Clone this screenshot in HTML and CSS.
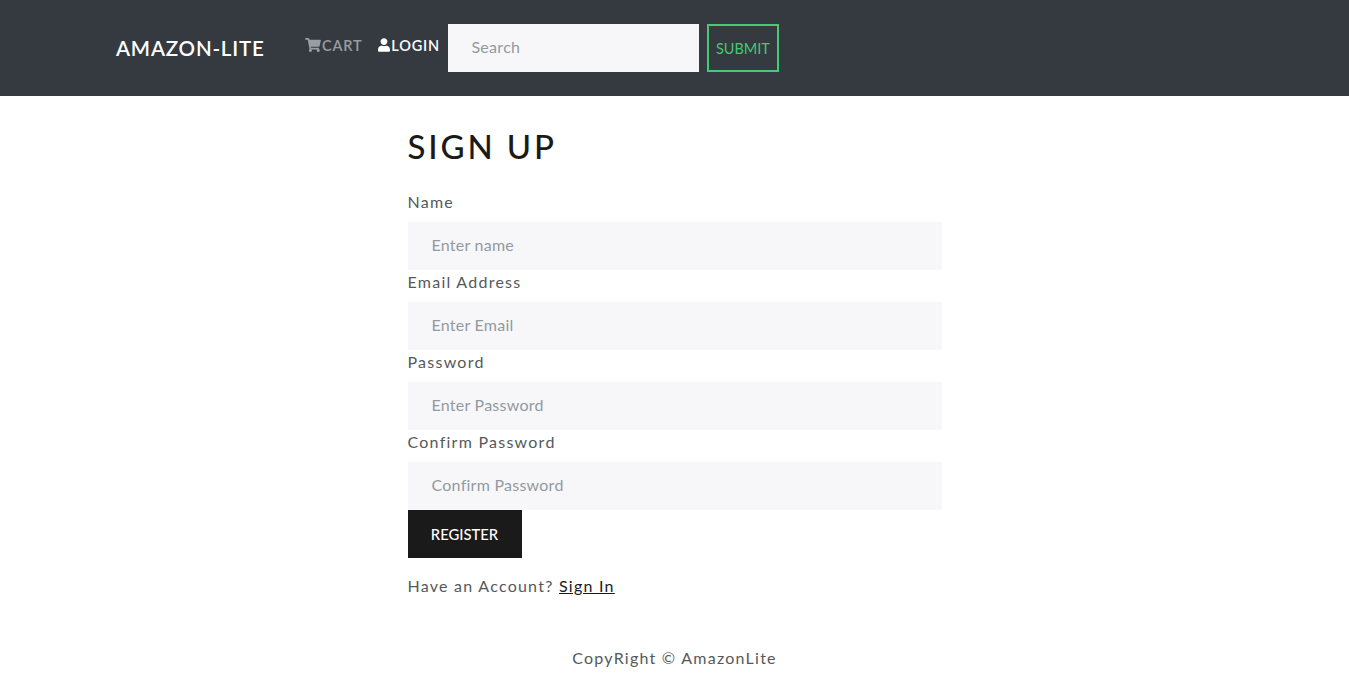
FILE: index.html
```html
<!DOCTYPE html>
<html lang="en">
<head>
<meta charset="utf-8">
<title>Amazon-Lite</title>
<link rel="stylesheet" href="styles.css">
</head>
<body>
<header class="navbar">
  <a class="brand" href="#">AMAZON-LITE</a>
  <nav class="nav">
    <a class="nav-link muted" href="#"><svg class="icon cart" viewBox="0 0 576 512"><path d="M528.12 301.319l47.273-208C578.806 78.301 567.391 64 551.99 64H159.208l-9.166-44.81C147.758 8.021 137.93 0 126.529 0H24C10.745 0 0 10.745 0 24v16c0 13.255 10.745 24 24 24h69.883l70.248 343.435C147.325 417.1 136 435.222 136 456c0 30.928 25.072 56 56 56s56-25.072 56-56c0-15.674-6.447-29.835-16.824-40h209.647C430.447 426.165 424 440.326 424 456c0 30.928 25.072 56 56 56s56-25.072 56-56c0-22.172-12.888-41.332-31.579-50.405l5.517-24.276c3.413-15.018-8.002-29.319-23.403-29.319H218.117l-6.545-32h293.145c11.206 0 20.92-7.754 23.403-18.681z"/></svg>CART</a>
    <a class="nav-link" href="#"><svg class="icon user" viewBox="0 0 448 512"><path d="M224 256c70.7 0 128-57.3 128-128S294.7 0 224 0 96 57.3 96 128s57.3 128 128 128zm89.6 32h-16.7c-22.2 10.2-46.9 16-72.9 16s-50.6-5.8-72.9-16h-16.7C60.2 288 0 348.2 0 422.4V464c0 26.5 21.5 48 48 48h352c26.5 0 48-21.5 48-48v-41.6c0-74.2-60.2-134.4-134.4-134.4z"/></svg>LOGIN</a>
  </nav>
  <form class="search">
    <input class="search-input" type="text" placeholder="Search">
    <button class="submit" type="button">SUBMIT</button>
  </form>
</header>
<main class="main">
  <h1 class="title">SIGN UP</h1>
  <form class="form">
    <label class="label">Name</label>
    <input class="field" type="text" placeholder="Enter name">
    <label class="label">Email Address</label>
    <input class="field" type="email" placeholder="Enter Email">
    <label class="label">Password</label>
    <input class="field" type="password" placeholder="Enter Password">
    <label class="label">Confirm Password</label>
    <input class="field" type="password" placeholder="Confirm Password">
    <button class="register" type="button">REGISTER</button>
  </form>
  <p class="switch">Have an Account? <a class="switch-link" href="#">Sign In</a></p>
</main>
<footer class="footer">CopyRight © AmazonLite</footer>
</body>
</html>
```
FILE: styles.css
```css
* { box-sizing: border-box; }
html, body { margin: 0; padding: 0; }
body {
  font-family: "Lato", "Liberation Sans", sans-serif;
  font-size: 16px;
  line-height: 24px;
  color: #55595c;
  background: #fff;
  letter-spacing: 1.25px;
}
a { text-decoration: none; color: inherit; }

.navbar {
  display: flex;
  align-items: center;
  height: 96px;
  padding: 0 116px;
  background: #343a40;
}
.brand {
  width: 181px;
  font-size: 20.5px;
  font-weight: 600;
  color: #fff;
  letter-spacing: .8px;
}
.nav { display: flex; }
.nav-link {
  display: flex;
  align-items: center;
  gap: 1px;
  padding: 0 8px;
  margin-top: -5px;
  font-size: 14.5px;
  font-weight: 600;
  letter-spacing: .8px;
  color: #fff;
}
.nav-link.muted { color: rgba(255, 255, 255, .5); }
.icon { display: block; height: 14px; fill: currentColor; margin-top: -2px; }
.cart { width: 16px; }
.user { width: 12px; }

.search { display: flex; gap: 8px; }
.search-input {
  width: 251px;
  height: 48px;
  padding: 0 24px 3px 23.5px;
  border: 0;
  background: #f7f7f9;
  font: inherit;
  font-size: 16px;
  letter-spacing: .3px;
  color: #55595c;
}
.submit {
  width: 72px;
  height: 48px;
  padding: 1px 0 0;
  border: 2px solid #48c774;
  background: transparent;
  color: #48c774;
  font: inherit;
  font-size: 14.5px;
  letter-spacing: 0;
}
input::placeholder { color: #919aa1; opacity: 1; }

.main {
  width: 534px;
  margin: 0 auto;
}
.title {
  margin: 0;
  padding: 26px 0 20px;
  font-size: 33px;
  line-height: 48px;
  font-weight: 500;
  letter-spacing: 2.85px;
  color: #1a1a1a;
}
.form { display: flex; flex-direction: column; align-items: flex-start; }
.label { display: block; height: 24px; margin: 0 0 8px; }
.field {
  width: 100%;
  height: 48px;
  padding: 0 24px 3px;
  border: 0;
  background: #f7f7f9;
  font: inherit;
  font-size: 16px;
  letter-spacing: .25px;
  color: #55595c;
}
.register {
  width: 114px;
  height: 48px;
  padding: 0;
  border: 0;
  background: #1a1a1a;
  color: #fff;
  font: inherit;
  font-size: 14.8px;
  font-weight: 500;
  letter-spacing: 0;
}
.switch { margin: 16px 0 0; }
.switch-link { color: #1a1a1a; text-decoration: underline; }
.footer { margin-top: 48px; text-align: center; }
```
